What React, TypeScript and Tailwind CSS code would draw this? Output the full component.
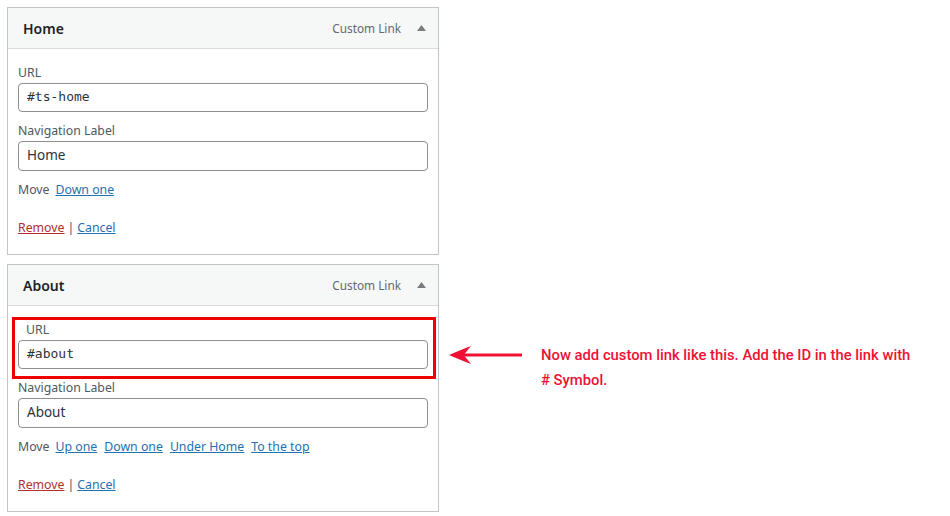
import React from 'react';

const sans = { fontFamily: '"Noto Sans", "Open Sans", sans-serif' };

type ItemProps = {
  title: string;
  url: string;
  moves: string[];
  highlight?: boolean;
};

const MenuItem: React.FC<ItemProps> = ({ title, url, moves, highlight }) => {
  return (
    <div className="w-[432px] border border-[#c3c4c7] bg-white text-[12.3px] text-[#50575e]" style={sans}>
      <div className="flex h-[41px] items-center border-b border-[#dcdcde] bg-[#f6f7f7] pl-[15px] pr-[12px]">
        <span className="flex-1 text-[14px] font-semibold text-[#1d2327]">{title}</span>
        <span className="mr-[16px] mt-[1px] text-[11.8px] text-[#646970]">Custom Link</span>
        <svg width="9" height="6" viewBox="0 0 9 6" className="mb-[1px]">
          <path d="M4.5 0 L9 6 L0 6 Z" fill="#787c82" />
        </svg>
      </div>
      <div className="relative px-[10px] pt-[15px] pb-[17px]">
        {highlight && (
          <div className="pointer-events-none absolute left-[4px] top-[11px] h-[62px] w-[424px] border-[3px] border-[#ee0000]" />
        )}
        <div className={`h-[18px] leading-[18px] ${highlight ? 'pl-[8px]' : ''}`}>URL</div>
        <div className="mt-[1px] flex h-[29px] items-center rounded-[4px] border border-[#8c8f94] px-[8px] pb-[1px] text-[13px] text-[#2c3338]" style={{ fontFamily: '"DejaVu Sans Mono", monospace' }}>
          {url}
        </div>
        <div className="mt-[10px] h-[18px] leading-[18px]">Navigation Label</div>
        <div className="mt-[1px] flex h-[30px] items-center rounded-[4px] border border-[#8c8f94] px-[8px] pb-[1px] text-[13.5px] text-[#2c3338]">
          {title}
        </div>
        <div className="mt-[10px] flex h-[18px] items-center leading-[18px]">
          <span className="mr-[6px]">Move</span>
          {moves.map((m) => (
            <a key={m} href="#" className="mr-[7px] text-[#2271b1] underline">
              {m}
            </a>
          ))}
        </div>
        <div className="mt-[20px] h-[18px] leading-[18px]">
          <a href="#" className="text-[#b32d2e] underline">Remove</a>
          <span className="mx-[3px] text-[#50575e]">|</span>
          <a href="#" className="text-[#2271b1] underline">Cancel</a>
        </div>
      </div>
    </div>
  );
};

const App: React.FC = () => {
  return (
    <div className="flex h-[516px] w-[950px] items-start bg-white pl-[7px] pt-[7px]">
      <div className="flex flex-col gap-[9px]">
        <MenuItem title="Home" url="#ts-home" moves={['Down one']} />
        <MenuItem title="About" url="#about" moves={['Up one', 'Down one', 'Under Home', 'To the top']} highlight />
      </div>
      <div className="ml-[10px] mt-[336px] flex items-start">
        <svg width="74" height="24" viewBox="0 0 74 24" className="shrink-0">
          <rect x="14" y="10.5" width="59" height="3" fill="#ee1133" />
          <path d="M0 12 C7 9 14 6 22 3 C19 7 16 10 15 12 C16 14 19 17 22 21 C14 18 7 15 0 12 Z" fill="#ee1133" />
        </svg>
        <div className="ml-[18px] w-[374px] text-[14.8px] font-medium leading-[25px] text-[#ee1133]" style={{ fontFamily: 'Roboto, sans-serif' }}>
          Now add custom link like this. Add the ID in the link with # Symbol.
        </div>
      </div>
    </div>
  );
};

export default App;
